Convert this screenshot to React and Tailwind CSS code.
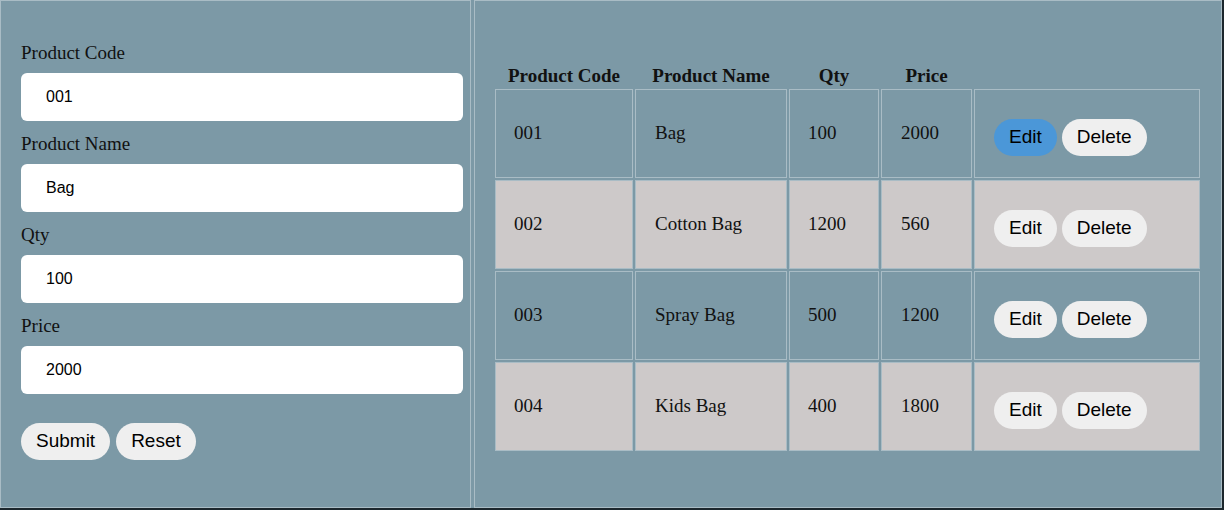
const products = [
  { code: "001", name: "Bag", qty: "100", price: "2000" },
  { code: "002", name: "Cotton Bag", qty: "1200", price: "560" },
  { code: "003", name: "Spray Bag", qty: "500", price: "1200" },
  { code: "004", name: "Kids Bag", qty: "400", price: "1800" },
];

const fields = [
  { label: "Product Code", value: "001" },
  { label: "Product Name", value: "Bag" },
  { label: "Qty", value: "100" },
  { label: "Price", value: "2000" },
];

const serif = "font-['Liberation_Serif',serif]";
const sans = "font-['Liberation_Sans',Arial,sans-serif]";

function PillButton({ children, active = false }) {
  return (
    <button
      type="button"
      className={`h-[37px] rounded-full px-[15px] text-[19px] text-black ${sans} ${
        active ? "bg-[#4b97d8]" : "bg-[#efefef]"
      }`}
    >
      {children}
    </button>
  );
}

function ProductForm() {
  return (
    <div className="w-[471px] shrink-0 border border-[#a9bcc5] pl-[20px] pt-[29px]">
      {fields.map((f) => (
        <div key={f.label}>
          <label className={`mt-[12px] mb-[9px] block h-[22px] text-[19px] leading-[22px] text-[#111] ${serif}`}>
            {f.label}
          </label>
          <input
            readOnly
            value={f.value}
            className={`block h-[48px] w-[442px] rounded-[6px] bg-white pl-[25px] text-[16px] text-black outline-none ${sans}`}
          />
        </div>
      ))}
      <div className="mt-[29px] flex gap-[6px]">
        <PillButton>Submit</PillButton>
        <PillButton>Reset</PillButton>
      </div>
    </div>
  );
}

function ProductTable() {
  const cell = "border border-[#a9bcc5] p-0 align-middle";
  return (
    <div className="flex-1 border border-[#a9bcc5] pl-[18px] pt-[61px]">
      <table className={`border-separate border-spacing-[2px] text-[19px] text-[#111] ${serif}`}>
        <thead>
          <tr className="h-[23px]">
            <th className="w-[138px] p-0 text-center font-bold leading-[21px]">Product Code</th>
            <th className="w-[152px] p-0 text-center font-bold leading-[21px]">Product Name</th>
            <th className="w-[90px] p-0 text-center font-bold leading-[21px]">Qty</th>
            <th className="w-[91px] p-0 text-center font-bold leading-[21px]">Price</th>
            <th className="w-[226px] p-0" />
          </tr>
        </thead>
        <tbody>
          {products.map((p, i) => (
            <tr key={p.code} className={`h-[89px] ${i % 2 ? "bg-[#cdc9c9]" : ""}`}>
              <td className={`${cell} pl-[18px]`}>{p.code}</td>
              <td className={`${cell} pl-[19px]`}>{p.name}</td>
              <td className={`${cell} pl-[18px]`}>{p.qty}</td>
              <td className={`${cell} pl-[19px]`}>{p.price}</td>
              <td className={`${cell} pl-[19px] pt-[8px]`}>
                <div className="flex gap-[5px]">
                  <PillButton active={i === 0}>Edit</PillButton>
                  <PillButton>Delete</PillButton>
                </div>
              </td>
            </tr>
          ))}
        </tbody>
      </table>
    </div>
  );
}

export default function App() {
  return (
    <div className="flex h-[510px] w-[1224px] gap-[3px] border-b-2 border-r-2 border-[#1c272d] bg-[#7c99a6]">
      <ProductForm />
      <ProductTable />
    </div>
  );
}
